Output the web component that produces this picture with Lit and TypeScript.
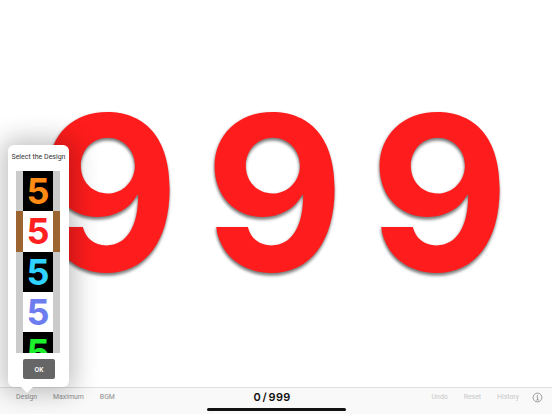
import { LitElement, html, css } from "lit";
import { customElement } from "lit/decorators.js";

const tiles = [
  { side: "#cbcbcb", bg: "#000", fg: "#ff8a14" },
  { side: "#9c6431", bg: "#fff", fg: "#ff2020" },
  { side: "#cbcbcb", bg: "#000", fg: "#2fd3ff" },
  { side: "#cbcbcb", bg: "#fff", fg: "#6d7df0" },
  { side: "#cbcbcb", bg: "#000", fg: "#1cf02c" },
];

@customElement("app-root")
export class AppRoot extends LitElement {
  static styles = css`
    :host {
      display: flex;
      flex-direction: column;
      width: 552px;
      height: 414px;
      background: #fff;
      font-family: Inter, "Liberation Sans", sans-serif;
      overflow: hidden;
      position: relative;
    }
    .stage {
      height: 387px;
      flex: none;
      display: flex;
      justify-content: center;
      align-items: flex-start;
      padding-top: 73px;
      box-sizing: border-box;
    }
    .digit {
      width: 165px;
      height: 240px;
      line-height: 240px;
      text-align: center;
      text-indent: -3px;
      font-size: 215px;
      font-weight: 750;
      color: #ff1c1c;
      text-shadow: 0 3px 3px rgba(0, 0, 0, 0.4), -1px 1px 3px rgba(0, 0, 0, 0.25);
    }
    .bar {
      flex: 1;
      background: #f9f9f9;
      border-top: 1px solid #dedede;
      position: relative;
      display: flex;
      align-items: flex-start;
      justify-content: space-between;
      padding: 0 9px 0 16px;
      height: 27px;
      box-sizing: border-box;
    }
    .group {
      display: flex;
      gap: 16px;
      align-items: center;
      height: 18px;
      font-family: Roboto, sans-serif;
      font-size: 6.9px;
      color: #8e8e8e;
    }
    .group.right {
      color: #c8c8c8;
      gap: 16px;
    }
    .group .info {
      margin-left: -3px;
    }
    .count {
      position: absolute;
      left: 0;
      right: 8px;
      top: 1px;
      text-align: center;
      font-size: 11px;
      font-weight: 600;
      letter-spacing: 0.3px;
      word-spacing: -1.5px;
      color: #111;
      line-height: 17px;
    }
    .home {
      position: absolute;
      left: 207px;
      top: 20px;
      width: 139px;
      height: 2.5px;
      border-radius: 2px;
      background: #111;
    }
    .info {
      width: 11px;
      height: 11px;
      display: block;
    }
    .popover {
      position: absolute;
      left: 8px;
      top: 145px;
      width: 61px;
      height: 242px;
      background: #fff;
      border-radius: 6px;
      box-shadow: 0 0 24px 6px rgba(0, 0, 0, 0.24);
      display: flex;
      flex-direction: column;
      align-items: flex-start;
      padding-left: 8px;
      box-sizing: border-box;
    }
    .arrow {
      position: absolute;
      left: 13px;
      bottom: -6px;
      width: 0;
      height: 0;
      border-left: 6px solid transparent;
      border-right: 6px solid transparent;
      border-top: 6px solid #fff;
    }
    .title {
      margin-top: 7px;
      margin-left: -5px;
      width: 55px;
      text-align: center;
      font-family: Roboto, sans-serif;
      font-size: 7px;
      line-height: 10px;
      color: #333;
      white-space: nowrap;
    }
    .list {
      margin-top: 9px;
      width: 44px;
      height: 182px;
      overflow: hidden;
      flex: none;
    }
    .tile {
      height: 40.3px;
      display: flex;
      justify-content: center;
      overflow: hidden;
    }
    .face {
      width: 30px;
      height: 100%;
      display: flex;
      align-items: center;
      justify-content: center;
      font-size: 36px;
      font-weight: 700;
      line-height: 40px;
    }
    .ok {
      margin-top: 6px;
      margin-left: 7px;
      width: 32px;
      height: 20px;
      border-radius: 2px;
      background: #666;
      color: #fff;
      font-size: 6px;
      font-weight: 700;
      display: flex;
      align-items: center;
      justify-content: center;
    }
  `;

  render() {
    return html`
      <div class="stage">
        <div class="digit">9</div>
        <div class="digit">9</div>
        <div class="digit">9</div>
      </div>
      <div class="bar">
        <div class="group">
          <span>Design</span><span>Maximum</span><span>BGM</span>
        </div>
        <div class="count">0 / 999</div>
        <div class="group right">
          <span>Undo</span><span>Reset</span><span>History</span>
          <svg class="info" viewBox="0 0 11 11" fill="none" stroke="#777" stroke-width="0.7">
            <circle cx="5.5" cy="5.5" r="4.4"></circle>
            <path d="M4.6 4.8H5.6V8M4.4 8H6.7"></path>
            <circle cx="5.4" cy="3.2" r="0.5" fill="#777" stroke="none"></circle>
          </svg>
        </div>
        <div class="home"></div>
      </div>
      <div class="popover">
        <div class="title">Select the Design</div>
        <div class="list">
          ${tiles.map(
            (t) => html`<div class="tile" style="background:${t.side}">
              <div class="face" style="background:${t.bg};color:${t.fg}">5</div>
            </div>`
          )}
        </div>
        <div class="ok">OK</div>
        <div class="arrow"></div>
      </div>
    `;
  }
}
